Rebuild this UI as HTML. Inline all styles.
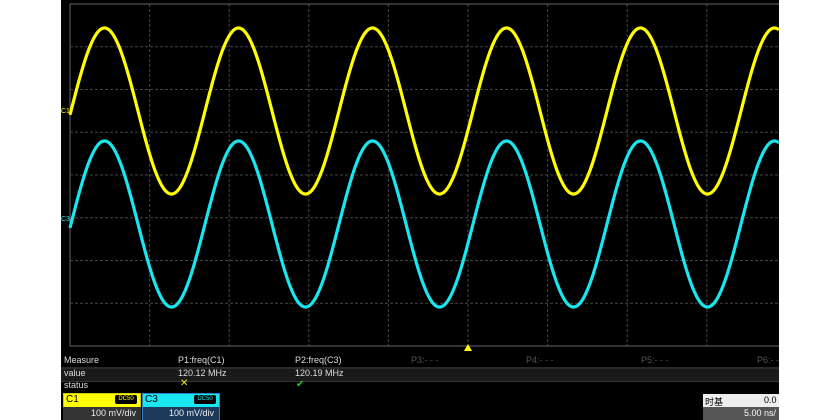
<!DOCTYPE html>
<html><head><meta charset="utf-8"><style>
body{margin:0;width:840px;height:420px;background:#fff;overflow:hidden;font-family:"Liberation Sans","Noto Sans CJK SC",sans-serif;}
#scr{position:absolute;left:61px;top:0;width:718px;height:420px;background:#000;overflow:hidden}
.t{position:absolute;font-size:9px;color:#ddd;white-space:nowrap}
</style></head><body>
<div id="scr">
<svg id="sv" width="718" height="420" style="position:absolute;left:0;top:0">
<g id="grid" stroke="#555" stroke-width="1" fill="none"></g>
<path id="y" stroke="#ffff00" stroke-width="3.2" fill="none"/>
<path id="c" stroke="#19e6ef" stroke-width="3.2" fill="none"/>
<polygon points="407,344 403,351 411,351" fill="#ffff00"/>
<line x1="0" y1="368" x2="718" y2="368" stroke="#555"/>
<rect x="0" y="369" width="718" height="12" fill="#1a1a1a"/>
<rect x="0" y="381" width="718" height="1" fill="#333"/>
</svg>
<div class="t" style="left:0;top:108px;color:#ff0;font-size:7px">C1</div>
<div class="t" style="left:0;top:216px;color:#19e6ef;font-size:7px">C3</div>
<div class="t" style="left:3px;top:355px">Measure</div>
<div class="t" style="left:3px;top:368px">value</div>
<div class="t" style="left:3px;top:380px">status</div>
<div class="t" style="left:117px;top:355px">P1:freq(C1)</div>
<div class="t" style="left:117px;top:368px">120.12 MHz</div>
<div class="t" style="left:119px;top:378px;color:#ee3;font-size:10px">✕</div>
<div class="t" style="left:234px;top:355px">P2:freq(C3)</div>
<div class="t" style="left:234px;top:368px">120.19 MHz</div>
<div class="t" style="left:235px;top:379px;color:#2c2;font-size:10px">✔</div>
<div class="t" style="left:350px;top:355px;color:#555">P3:- - -</div>
<div class="t" style="left:465px;top:355px;color:#555">P4:- - -</div>
<div class="t" style="left:580px;top:355px;color:#555">P5:- - -</div>
<div class="t" style="left:696px;top:355px;color:#555">P6:- -</div>
<div style="position:absolute;left:2px;top:393px;width:76px;height:13px;background:#ff0;border:1px solid #cc0"></div>
<div class="t" style="left:5px;top:394px;color:#000;font-size:10px">C1</div>
<div style="position:absolute;left:54px;top:395px;width:22px;height:9px;background:#000;color:#ff0;font-size:6px;line-height:9px;text-align:center;border-radius:2px">DC50</div>
<div style="position:absolute;left:2px;top:407px;width:78px;height:13px;background:#333"></div>
<div class="t" style="left:30px;top:408px;color:#eee">100 mV/div</div>
<div style="position:absolute;left:81px;top:393px;width:76px;height:13px;background:#19e6ef;border:1px solid #2a7fd0"></div>
<div class="t" style="left:84px;top:394px;color:#000;font-size:10px">C3</div>
<div style="position:absolute;left:133px;top:395px;width:22px;height:9px;background:#000;color:#19e6ef;font-size:6px;line-height:9px;text-align:center;border-radius:2px">DC50</div>
<div style="position:absolute;left:81px;top:407px;width:76px;height:13px;background:#1e3a5a;border-left:1px solid #2a7fd0;border-right:1px solid #2a7fd0"></div>
<div class="t" style="left:108px;top:408px;color:#eee">100 mV/div</div>
<div style="position:absolute;left:642px;top:394px;width:76px;height:13px;background:#eee"></div>
<div class="t" style="left:644px;top:395px;color:#000">时基</div>
<div class="t" style="left:703px;top:395px;color:#000">0.0</div>
<div style="position:absolute;left:642px;top:407px;width:76px;height:13px;background:#555"></div>
<div class="t" style="left:683px;top:408px;color:#fff">5.00 ns/</div>
</div>
<script>
var g=document.getElementById('grid'),h='';
var ox=9,p=79.6;
for(var i=0;i<=10;i++){var x=ox+i*p;h+='<line x1="'+x+'" y1="4" x2="'+x+'" y2="346" stroke="'+(i==0?'#666':'#444')+'" '+(i>0?'stroke-dasharray="3,2"':'')+'/>';}
for(var j=0;j<=8;j++){var y=4+j*42.75;h+='<line x1="'+ox+'" y1="'+y+'" x2="718" y2="'+y+'" stroke="'+(j==0||j==8?'#666':'#444')+'" '+(j>0&&j<8?'stroke-dasharray="3,2"':'')+'/>';}
g.innerHTML=h;
function w(cy){var d='';for(var x=ox;x<=718;x+=1){var X=x+61;var v=cy-83*Math.sin(2*Math.PI*(X-71)/134);d+=(x==ox?'M':'L')+x+','+v.toFixed(1);}return d;}
document.getElementById('y').setAttribute('d',w(111));
document.getElementById('c').setAttribute('d',w(224));
</script>
</body></html>
